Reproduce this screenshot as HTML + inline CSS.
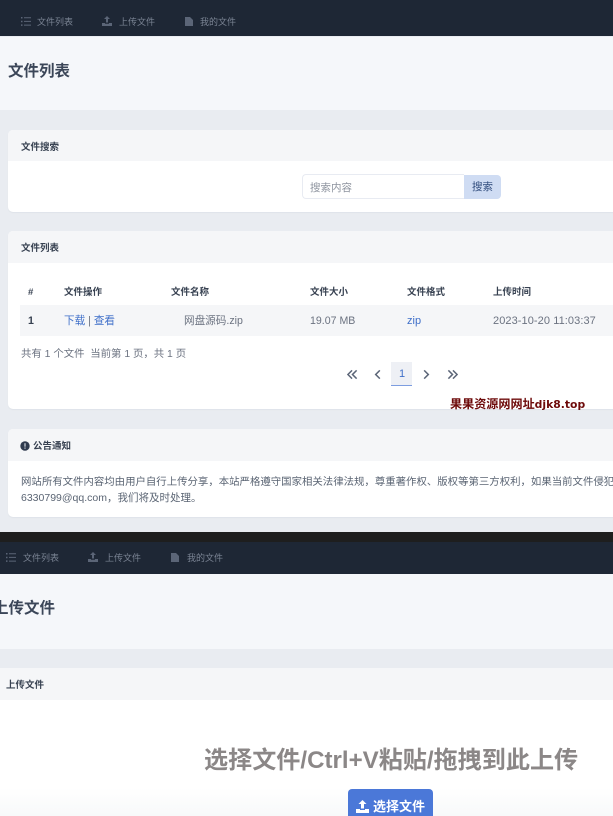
<!DOCTYPE html>
<html lang="zh-CN">
<head>
<meta charset="utf-8">
<title>文件列表</title>
<style>
html,body{margin:0;padding:0;width:613px;height:816px;overflow:hidden}
body{background:#e9ecf1;font-family:"Liberation Sans","Noto Sans CJK SC",sans-serif;color:#4b5563}
#p{position:absolute;left:0;top:0;width:613px;height:816px;overflow:hidden;background:#e9ecf1;filter:blur(.35px)}
.r{position:absolute}
.t{position:absolute;white-space:nowrap;line-height:1}
.nav{position:absolute;left:0;width:613px;background:#1e2735}
.navt{position:absolute;white-space:nowrap;line-height:1;font-size:9px;color:#7b8494}
.ic{position:absolute;fill:#5b6577}
.card{position:absolute;left:8px;width:640px;background:#fff;border-radius:5px;box-shadow:0 1px 1px #dfe3e9;overflow:hidden}
.ch{position:absolute;left:0;top:0;width:100%;background:#f5f6f8}
.ct{position:absolute;white-space:nowrap;line-height:1;font-size:9.5px;font-weight:700;color:#374151}
.th{position:absolute;white-space:nowrap;line-height:1;font-size:9.5px;font-weight:700;color:#374151;top:287.500px}
.td{position:absolute;white-space:nowrap;line-height:1;font-size:10.600px;color:#6b7280;top:316px}
.b{color:#3f6fc9}
svg.pg{position:absolute;fill:none;stroke:#5b6577;stroke-width:1.7}
</style>
</head>
<body>
<div id="p">
<!-- top nav -->
<div class="nav" style="top:0;height:36px"></div>
<svg class="ic" style="left:21px;top:17px" width="10" height="9" viewBox="0 0 10 9"><path d="M0 0h1.500v1.500H0zM3 .2h7v1H3zM0 3.700h1.500v1.500H0zM3 3.900h7v1H3zM0 7.400h1.500v1.500H0zM3 7.600h7v1H3z"/></svg>
<div class="navt" style="left:37px;top:18px">文件列表</div>
<svg class="ic" style="left:102px;top:16px" width="10" height="10" viewBox="0 0 10 10"><path d="M5 0l3 3H6v3.500H4V3H2zM0 7h3v.8h4V7h3v3H0z"/></svg>
<div class="navt" style="left:119px;top:18px">上传文件</div>
<svg class="ic" style="left:185px;top:17px" width="8" height="9" viewBox="0 0 8 9"><path d="M0 0h5l3 3v6H0z"/></svg>
<div class="navt" style="left:200px;top:18px">我的文件</div>

<!-- header -->
<div class="r" style="left:0;top:37px;width:613px;height:73px;background:#f5f7fa"></div>
<div class="t" style="left:8px;top:64px;font-size:15.500px;font-weight:700;color:#3b4658">文件列表</div>

<!-- search card -->
<div class="card" style="top:130px;height:82px"><div class="ch" style="height:31px"></div></div>
<div class="ct" style="left:21px;top:142.500px">文件搜索</div>
<div class="r" style="left:302px;top:174px;width:161px;height:23px;border:1px solid #e8ebf2;border-right:0;border-radius:4px 0 0 4px;background:#fff"></div>
<div class="t" style="left:310px;top:182.500px;font-size:10.500px;color:#8d939e">搜索内容</div>
<div class="r" style="left:464px;top:175px;width:37px;height:24px;background:#cfdcf3;border-radius:0 4px 4px 0"></div>
<div class="t" style="left:472px;top:182px;font-size:10.500px;color:#2f4b7c">搜索</div>

<!-- list card -->
<div class="card" style="top:231px;height:178px"><div class="ch" style="height:32px"></div></div>
<div class="ct" style="left:21px;top:243.500px">文件列表</div>
<div class="th" style="left:28px">#</div>
<div class="th" style="left:64px">文件操作</div>
<div class="th" style="left:171px">文件名称</div>
<div class="th" style="left:310px">文件大小</div>
<div class="th" style="left:407px">文件格式</div>
<div class="th" style="left:493px">上传时间</div>
<div class="r" style="left:20px;top:305px;width:593px;height:31px;background:#f5f6f8"></div>
<div class="td" style="left:28px;font-weight:700;color:#374151">1</div>
<div class="td" style="left:64px"><span class="b">下载</span> | <span class="b">查看</span></div>
<div class="td" style="left:184px">网盘源码.zip</div>
<div class="td" style="left:310px">19.07 MB</div>
<div class="td" style="left:407px;font-size:11px"><span class="b">zip</span></div>
<div class="td" style="left:493px;font-size:11px;letter-spacing:.08px">2023-10-20 11:03:37</div>
<div class="t" style="left:21px;top:350px;font-size:10.400px;color:#6b7280">共有 1 个文件&nbsp;&nbsp;当前第 1 页，共 1 页</div>

<!-- pagination -->
<svg class="pg" style="left:346.500px;top:368.500px" width="11" height="11" viewBox="0 0 12 12"><path d="M5.500 1.500L1 6l4.500 4.500M10.500 1.500L6 6l4.500 4.500"/></svg>
<svg class="pg" style="left:374px;top:368.500px" width="8" height="11" viewBox="0 0 8 12"><path d="M6 1.500L1.500 6 6 10.500"/></svg>
<div class="r" style="left:391px;top:362px;width:21px;height:23px;background:#eef0f5;border-bottom:1.500px solid #7d9de0"></div>
<div class="t" style="left:399px;top:369px;font-size:11px;color:#3f6fc9">1</div>
<svg class="pg" style="left:422px;top:368.500px" width="8" height="11" viewBox="0 0 8 12"><path d="M2 1.500L6.500 6 2 10.500"/></svg>
<svg class="pg" style="left:447px;top:368.500px" width="11" height="11" viewBox="0 0 12 12"><path d="M1.500 1.500L6 6l-4.500 4.500M6.500 1.500L11 6l-4.500 4.500"/></svg>

<!-- watermark -->
<div class="t" style="left:450px;top:398px;font-size:12.100px;font-weight:700;color:#6d0a0a">果果资源网网址<span style="font-family:'DejaVu Sans',sans-serif;font-size:10.800px">djk8.top</span></div>

<!-- notice card -->
<div class="card" style="top:429px;height:88px"><div class="ch" style="height:32px"></div></div>
<svg class="r" style="left:20px;top:441px" width="10" height="10" viewBox="0 0 10 10"><circle cx="5" cy="5" r="4.700" fill="#2f3a4e"/><rect x="4.400" y="2.200" width="1.200" height="3.500" fill="#d5d9e0"/><rect x="4.400" y="6.500" width="1.200" height="1.200" fill="#d5d9e0"/></svg>
<div class="ct" style="left:33px;top:441.500px">公告通知</div>
<div class="t" style="left:21px;top:477.500px;font-size:10.420px;color:#5a6473">网站所有文件内容均由用户自行上传分享，本站严格遵守国家相关法律法规，尊重著作权、版权等第三方权利，如果当前文件侵犯了</div>
<div class="t" style="left:21px;top:492.500px;font-size:10.500px;color:#5a6473">6330799@qq.com，我们将及时处理。</div>

<!-- second screenshot -->
<div class="r" style="left:0;top:532px;width:613px;height:10px;background:#1e1e1e"></div>
<div class="nav" style="top:542px;height:32px"></div>
<svg class="ic" style="left:6px;top:553px" width="10" height="9" viewBox="0 0 10 9"><path d="M0 0h1.500v1.500H0zM3 .2h7v1H3zM0 3.700h1.500v1.500H0zM3 3.900h7v1H3zM0 7.400h1.500v1.500H0zM3 7.600h7v1H3z"/></svg>
<div class="navt" style="left:23px;top:554px">文件列表</div>
<svg class="ic" style="left:88px;top:552px" width="10" height="10" viewBox="0 0 10 10"><path d="M5 0l3 3H6v3.500H4V3H2zM0 7h3v.8h4V7h3v3H0z"/></svg>
<div class="navt" style="left:105px;top:554px">上传文件</div>
<svg class="ic" style="left:171px;top:553px" width="8" height="9" viewBox="0 0 8 9"><path d="M0 0h5l3 3v6H0z"/></svg>
<div class="navt" style="left:187px;top:554px">我的文件</div>

<div class="r" style="left:0;top:574px;width:613px;height:75px;background:#f5f7fa"></div>
<div class="t" style="left:-7px;top:601px;font-size:15.500px;font-weight:700;color:#3b4658">上传文件</div>
<div class="r" style="left:0;top:668px;width:613px;height:148px;background:linear-gradient(#fff 0,#fff 120px,#f8f9fa 148px)"></div>
<div class="r" style="left:0;top:668px;width:613px;height:32px;background:#f5f6f8"></div>
<div class="ct" style="left:6px;top:680.500px">上传文件</div>
<div class="t" style="left:204px;top:749px;font-size:24.100px;font-weight:700;color:#8b8787">选择文件/Ctrl+V粘贴/拖拽到此上传</div>
<div class="r" style="left:348px;top:789px;width:85px;height:34px;background:#4b78d8;border-radius:4px"></div>
<svg class="r" style="left:356px;top:799.500px" width="13" height="13" viewBox="0 0 13 13"><path fill="#fff" d="M6.500 0l4 4H8v4.500H5V4H2.500zM0 9h4v1h5V9h4v4H0z"/></svg>
<div class="t" style="left:373px;top:800px;font-size:13px;font-weight:700;color:#fff">选择文件</div>
</div>
</body>
</html>
